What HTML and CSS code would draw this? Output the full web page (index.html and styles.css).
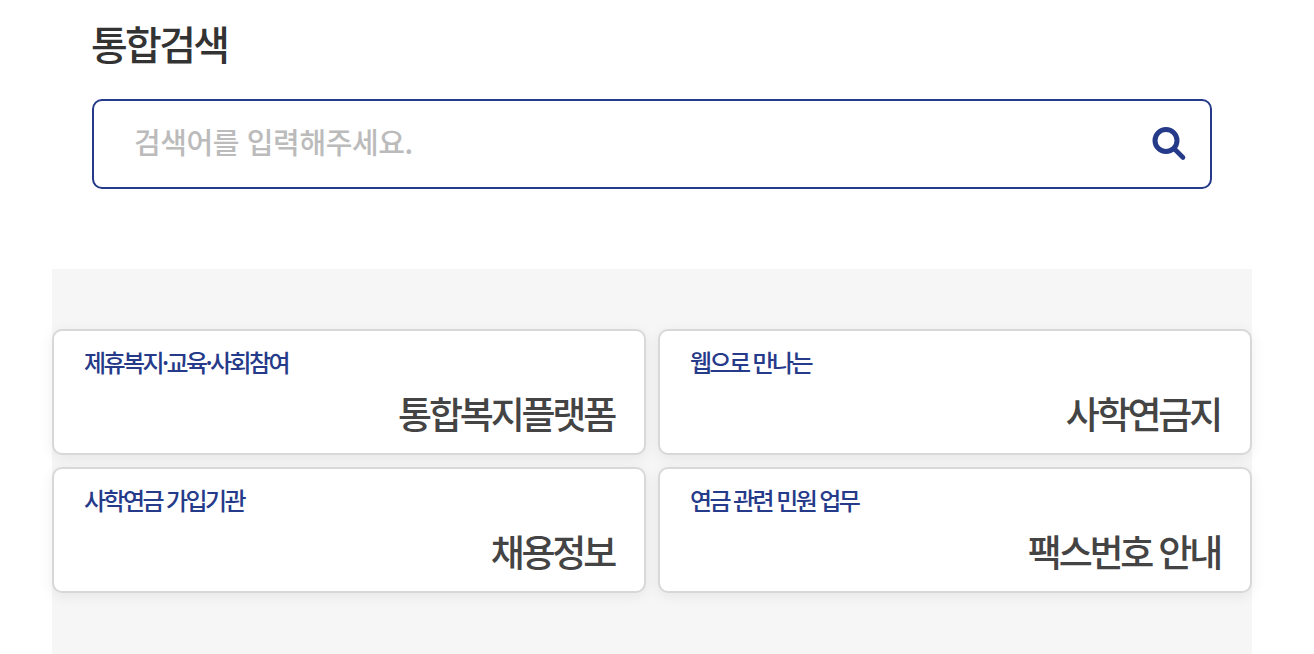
FILE: index.html
```html
<!DOCTYPE html>
<html lang="ko">

<head>
    <meta charset="UTF-8">
    <meta name="viewport" content="width=device-width, initial-scale=1.0">
    <title>통합검색</title>
    <link rel="stylesheet" href="styles.css">
</head>

<body>
    <div class="search-area">
        <h2 class="search-title">통합검색</h2>
        <div class="search-box">
            <input class="search-input" type="text" placeholder="검색어를 입력해주세요.">
            <svg class="search-icon" width="36" height="36" viewBox="0 0 36 36" fill="none">
                <circle cx="15" cy="14.5" r="11" stroke="#263a8a" stroke-width="5"/>
                <path d="M24 23.5L32 31.5" stroke="#263a8a" stroke-width="4.6" stroke-linecap="round"/>
            </svg>
        </div>
    </div>

    <div class="link-area">
        <a class="link-card" href="#">
            <span class="link-sub">제휴복지·교육·사회참여</span>
            <strong class="link-main">통합복지플랫폼</strong>
        </a>
        <a class="link-card" href="#">
            <span class="link-sub">웹으로 만나는</span>
            <strong class="link-main">사학연금지</strong>
        </a>
        <a class="link-card" href="#">
            <span class="link-sub">사학연금 가입기관</span>
            <strong class="link-main">채용정보</strong>
        </a>
        <a class="link-card" href="#">
            <span class="link-sub">연금 관련 민원 업무</span>
            <strong class="link-main">팩스번호 안내</strong>
        </a>
    </div>
</body>

</html>
```

FILE: styles.css
```css
html, body {
    height: 100%;
    overflow: hidden;
}

body {
    margin: 0;
    background-color: #fff;
    font-family: "Noto Sans CJK KR", "Noto Sans", sans-serif;
}

/* 검색 영역 */
.search-area {
    padding: 0 102px 80px 91px;
}

.search-title {
    margin: 0;
    height: 99px;
    padding-top: 16px;
    box-sizing: border-box;
    font-size: 40px;
    line-height: 54px;
    font-weight: 500;
    letter-spacing: -2.7px;
    color: #333;
}

.search-box {
    display: flex;
    align-items: center;
    height: 90px;
    margin-left: 1px;
    box-sizing: border-box;
    padding: 0 23px 0 40px;
    border: 2px solid #263a8a;
    border-radius: 10px;
}

.search-input {
    flex: 1;
    margin-bottom: 7px;
    border: 0;
    outline: 0;
    padding: 0;
    font-family: inherit;
    font-size: 29px;
    font-weight: 500;
    letter-spacing: -0.4px;
    color: #333;
    background: transparent;
}

.search-input::placeholder {
    color: #bbb;
    opacity: 1;
}

.search-icon {
    flex-shrink: 0;
}

/* 바로가기 카드 */
.link-area {
    display: grid;
    grid-template-columns: 594px 594px;
    grid-auto-rows: 126px;
    gap: 12px;
    width: 1200px;
    height: 385px;
    box-sizing: border-box;
    margin-left: 52px;
    padding-top: 60px;
    background-color: #f6f6f6;
}

.link-card {
    display: flex;
    flex-direction: column;
    padding: 13px 30px 0 30px;
    box-sizing: border-box;
    border: 2px solid #d8d8d8;
    border-radius: 10px;
    background-color: #fff;
    box-shadow: 0 3px 14px rgba(0, 0, 0, .07);
    text-decoration: none;
}

.link-sub {
    font-size: 24px;
    line-height: 36px;
    font-weight: 500;
    letter-spacing: -2.6px;
    color: #263a8a;
}

.link-main {
    margin-top: 6px;
    text-align: right;
    font-size: 37px;
    line-height: 54px;
    font-weight: 500;
    letter-spacing: -3.2px;
    color: #444;
}
```
